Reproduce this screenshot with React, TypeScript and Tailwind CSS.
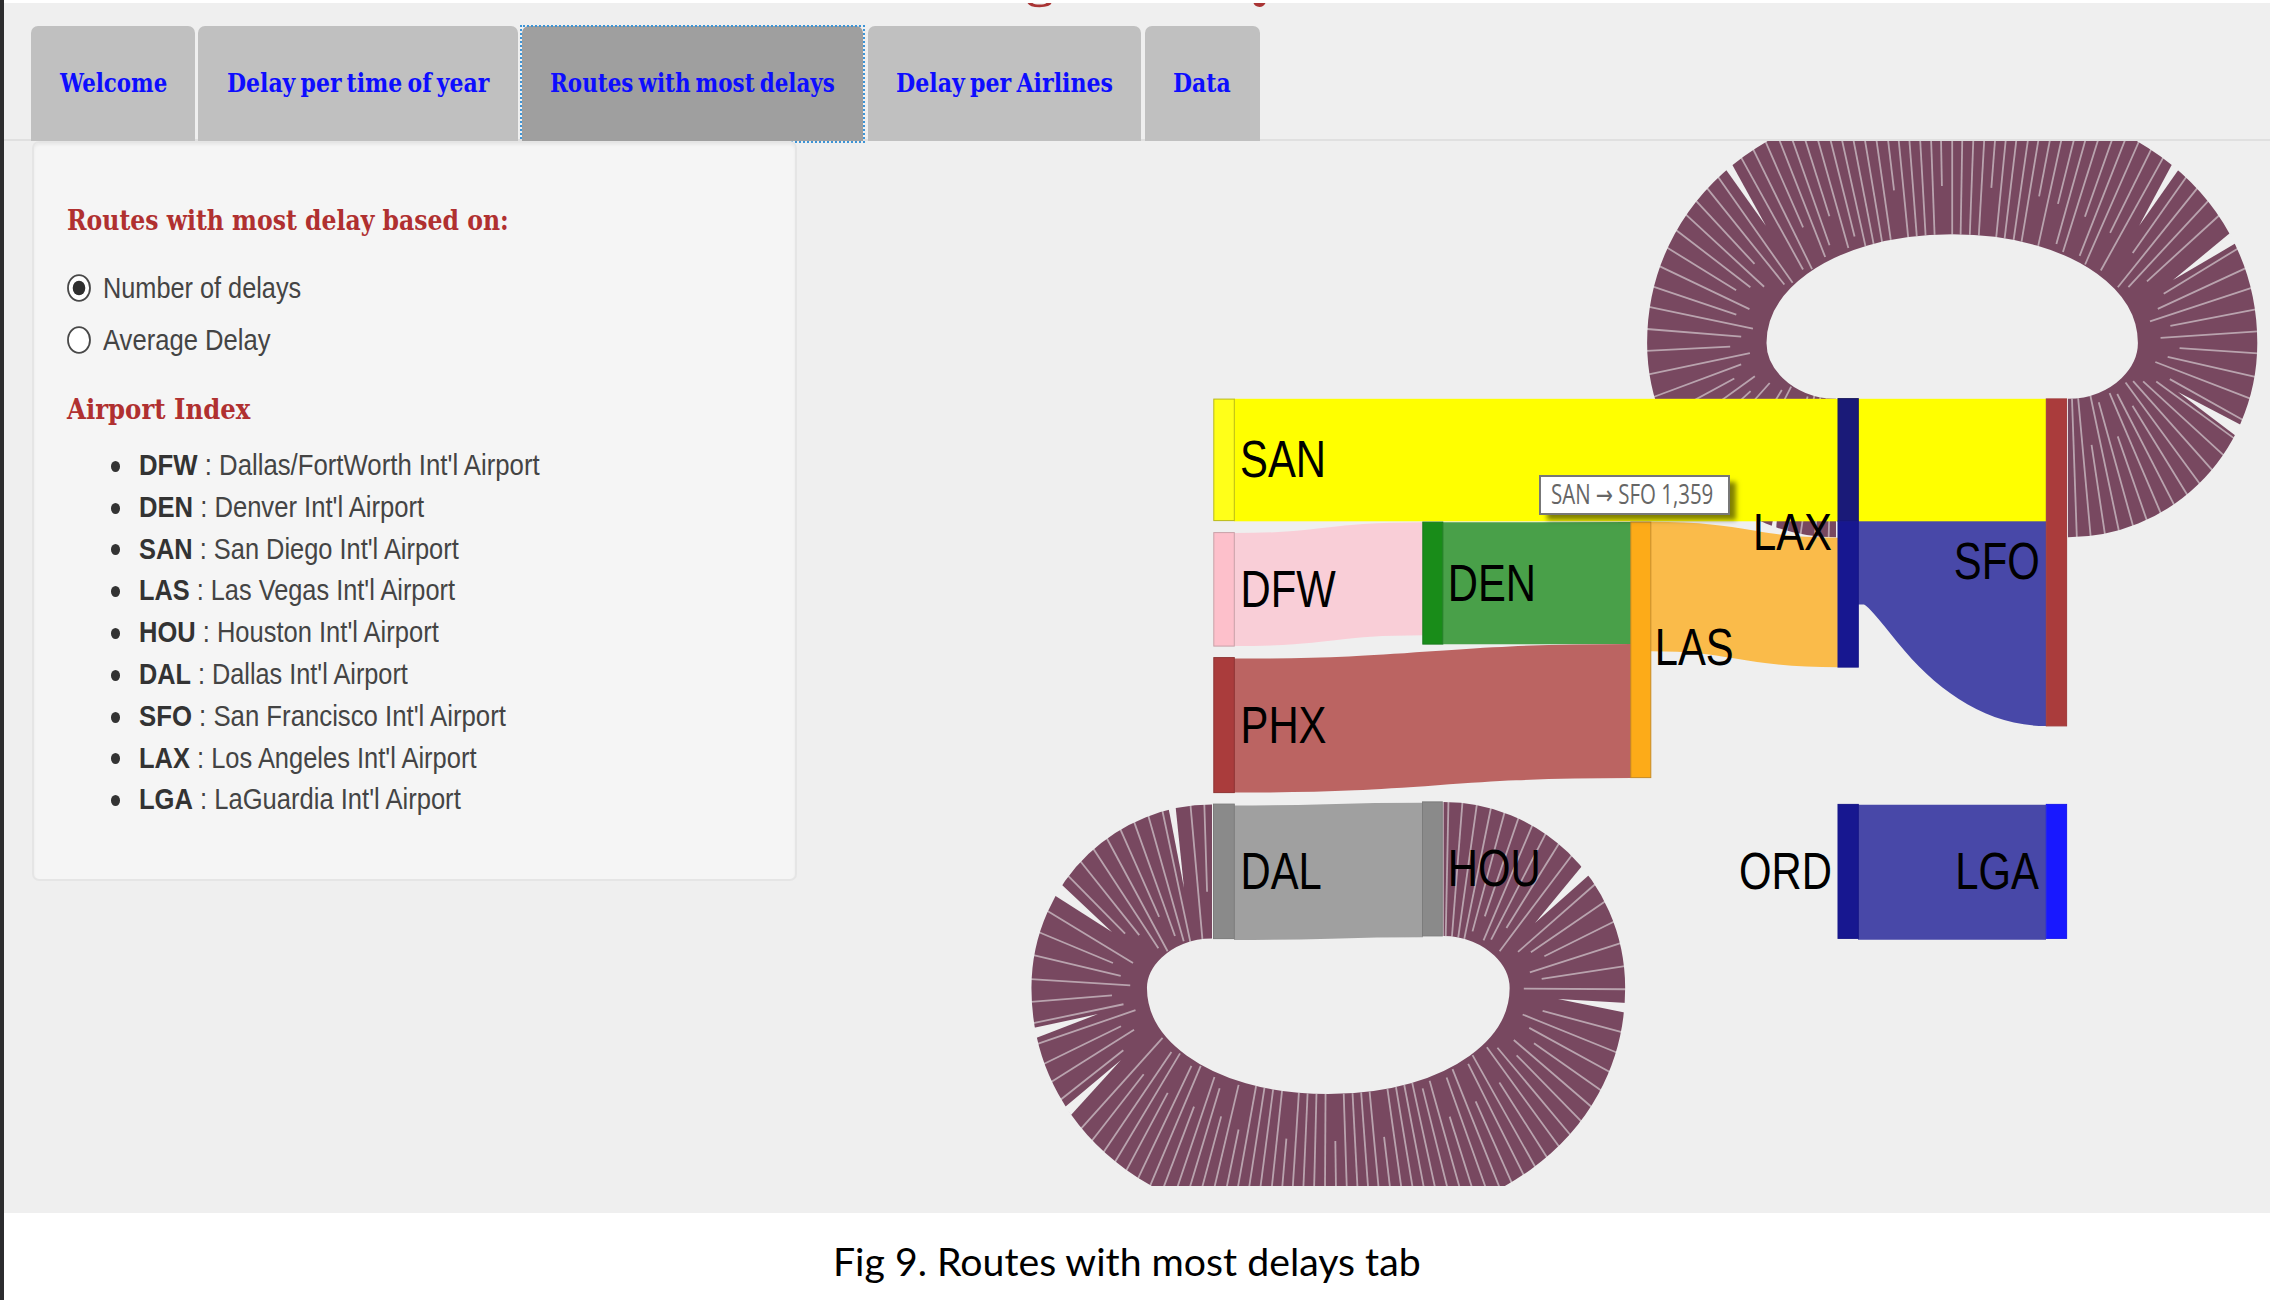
import { useLayoutEffect, useRef, useState, type ReactNode } from "react";

/** Single line of text condensed or stretched horizontally to a given width. */
function Fit({ width, children, className = "" }: { width: number; children: ReactNode; className?: string }) {
  const ref = useRef<HTMLSpanElement>(null);
  const [scale, setScale] = useState(1);
  useLayoutEffect(() => {
    if (ref.current) setScale(width / ref.current.offsetWidth);
  }, [width]);
  return (
    <span className={"block " + className} style={{ width }}>
      <span ref={ref} className="inline-block origin-left whitespace-nowrap" style={{ transform: `scaleX(${scale})` }}>
        {children}
      </span>
    </span>
  );
}

const tabs = [
  { label: "Welcome", box: "w-[164px] mr-[3px]", text: 107 },
  { label: "Delay per time of year", box: "w-[320px] mr-[4px]", text: 262 },
  { label: "Routes with most delays", box: "w-[341px] mr-[5px]", text: 285, active: true },
  { label: "Delay per Airlines", box: "w-[273px] mr-[4px]", text: 217 },
  { label: "Data", box: "w-[115px] pr-[1.5px]", text: 58 },
];

const airports: [string, string, number][] = [
  ["DFW", "Dallas/FortWorth Int'l Airport", 400.5],
  ["DEN", "Denver Int'l Airport", 285.5],
  ["SAN", "San Diego Int'l Airport", 319.5],
  ["LAS", "Las Vegas Int'l Airport", 316],
  ["HOU", "Houston Int'l Airport", 300],
  ["DAL", "Dallas Int'l Airport", 269],
  ["SFO", "San Francisco Int'l Airport", 366.5],
  ["LAX", "Los Angeles Int'l Airport", 337.5],
  ["LGA", "LaGuardia Int'l Airport", 321.5],
];

type P = [number, number];
type Seg = [P, P, P, P];
type Wedge = [P, P, P];
const SX = 0.862;

/** Half-oval curve from one end of a return link to the other, through its apex. */
function loopSegments(l: P, r: P, lx: number, rx: number, midY: number, apexY: number): Seg[] {
  const cx = (lx + rx) / 2;
  const k = 0.5523;
  const k2 = 0.585;
  return [
    [l, [l[0] - (l[0] - lx) * k, l[1]], [lx, midY + (l[1] - midY) * k], [lx, midY]],
    [[lx, midY], [lx, midY + (apexY - midY) * k2], [cx - (cx - lx) * k2, apexY], [cx, apexY]],
    [[cx, apexY], [cx + (rx - cx) * k2, apexY], [rx, midY + (apexY - midY) * k2], [rx, midY]],
    [[rx, midY], [rx, midY + (r[1] - midY) * k], [r[0] + (rx - r[0]) * k, r[1]], r],
  ];
}

function seams(segs: Seg[], half: number, step: number) {
  const out: [number, number, number, number][] = [];
  let prev: P | null = null;
  let acc = step / 2;
  let n = 0;
  const side = segs[0][0][1] > segs[1][3][1] ? 1 : -1;
  for (const s of segs) {
    for (let i = 0; i <= 400; i++) {
      const t = i / 400;
      const u = 1 - t;
      const at = (d: 0 | 1) =>
        u * u * u * s[0][d] + 3 * u * u * t * s[1][d] + 3 * u * t * t * s[2][d] + t * t * t * s[3][d];
      const der = (d: 0 | 1) =>
        3 * u * u * (s[1][d] - s[0][d]) + 6 * u * t * (s[2][d] - s[1][d]) + 3 * t * t * (s[3][d] - s[2][d]);
      const x = at(0) / SX;
      const y = at(1);
      const tx = der(0) / SX;
      const ty = der(1);
      const len = Math.hypot(tx, ty) || 1;
      const nx = (ty / len) * side;
      const ny = (-tx / len) * side;
      const lateral = Math.abs(nx);
      const local = step * (1 + 0.2 * lateral * lateral);
      if (prev) acc += Math.hypot(x - prev[0], y - prev[1]);
      prev = [x, y];
      if (acc < local) continue;
      acc -= local;
      n++;
      const jitter = ((n * 37) % 11) / 11;
      const from =
        lateral > 0.75
          ? -half * (0.3 + 0.5 * jitter)
          : lateral > 0.25
            ? -half * (n % 3 === 1 ? 0.3 + 0.3 * jitter : 0.8 + 0.2 * jitter)
            : -half * (n % 5 === 1 ? 0.3 : 1);
      out.push([(x + nx * from) * SX, y + ny * from, (x + nx * (half + 1)) * SX, y + ny * (half + 1)]);
    }
  }
  return out;
}

function Loop({ segs, width, wedges }: { segs: Seg[]; width: number; wedges: Wedge[] }) {
  const f = (p: P) => `${p[0] / SX} ${p[1]}`;
  const d = `M${f(segs[0][0])}` + segs.map((s) => `C${f(s[1])} ${f(s[2])} ${f(s[3])}`).join("");
  const lines = seams(segs, width / 2, 11.8).filter((l) =>
    wedges.every(([a, b]) => Math.hypot(l[2] - (a[0] + b[0]) / 2, l[3] - (a[1] + b[1]) / 2) > 9),
  );
  return (
    <g>
      <path d={d} transform={`scale(${SX} 1)`} fill="none" stroke="#784860" strokeWidth={width} />
      {lines.map((l, i) => (
        <line key={i} x1={l[0]} y1={l[1]} x2={l[2]} y2={l[3]} stroke="#efefef" strokeOpacity={0.55} strokeWidth={1.8} />
      ))}
      {wedges.map((w) => (
        <polygon key={w.join()} points={w.join(" ")} fill="#efefef" />
      ))}
    </g>
  );
}

const upper = loopSegments([1836, 468], [2068, 468], 1706.8, 2197.6, 343, 165);
const lower = loopSegments([1212, 871.5], [1443.5, 869], 1089.2, 1567.4, 988, 1161);

const upperWedges: Wedge[] = [
  [[1725.5, 169], [1731, 162.5], [1766, 226]],
  [[2173, 162.5], [2179, 169], [2139, 226]],
  [[2230, 233], [2236, 243], [2173, 280]],
  [[2243, 426], [2236, 436], [2178, 392]],
  [[1768, 545], [1775, 545], [1779, 490]],
];
const lowerWedges: Wedge[] = [
  [[1168.5, 808], [1175.5, 806], [1184, 888]],
  [[1054, 895], [1061, 884], [1112, 932]],
  [[1033, 1028], [1036, 1038], [1098, 1014]],
  [[1065, 1107], [1071, 1115], [1121, 1060]],
  [[1582, 866], [1589, 875], [1535, 923]],
  [[1627, 1003], [1627, 1013], [1558, 999]],
];

function Flow({ x1, y1, x2, y2, w, color }: { x1: number; y1: number; x2: number; y2: number; w: number; color: string }) {
  const m = (x1 + x2) / 2;
  return <path d={`M${x1} ${y1}C${m} ${y1} ${m} ${y2} ${x2} ${y2}`} fill="none" stroke={color} strokeWidth={w} />;
}

const nodes: [number, number, number, number, string, string][] = [
  [1213.8, 399, 20.5, 121.5, "#ffff19", "#b9b91a"],
  [1213.8, 532.5, 20.5, 113.5, "#fdc0cb", "#c9a0a8"],
  [1213.8, 657.5, 20.5, 135, "#aa3c3c", "#8e3434"],
  [1422.8, 522, 20, 122, "#198c19", "#197a1d"],
  [1630.8, 522, 20, 255.5, "#fdab18", "#c58a25"],
  [1838, 398.5, 20.3, 122.5, "#1a1a78", "#1a1a60"],
  [1838, 521, 20.3, 146, "#171790", "#171788"],
  [2046.3, 398.8, 20.3, 327, "#aa3c3c", "#a03a3a"],
  [1838, 804.3, 20.3, 134, "#171790", "#171788"],
  [2046.3, 804.3, 20.3, 134, "#1818ff", "#1818ee"],
  [1213.5, 804, 20.8, 134.5, "#8a8a8a", "#7c7c7c"],
  [1422.5, 801.8, 19.8, 134, "#8a8a8a", "#7c7c7c"],
];

const labels: [string, number, number, "start" | "end"][] = [
  ["SAN", 1240, 477.2, "start"],
  ["DFW", 1240.5, 606.7, "start"],
  ["PHX", 1240.5, 742.5, "start"],
  ["DEN", 1447.7, 600.5, "start"],
  ["LAS", 1654.7, 665.2, "start"],
  ["LAX", 1832, 550.3, "end"],
  ["SFO", 2039.7, 579.3, "end"],
  ["ORD", 1832, 889, "end"],
  ["LGA", 2039, 889, "end"],
  ["DAL", 1240.5, 888.6, "start"],
  ["HOU", 1447.7, 886.3, "start"],
];

function SankeyChart() {
  return (
    <svg className="block h-[1045px] w-[1474px]" viewBox="797 140.9 1474 1045">
      <Loop segs={upper} width={138.5} wedges={upperWedges} />
      <Loop segs={lower} width={134} wedges={lowerWedges} />
      <Flow x1={1234} y1={589.5} x2={1423} y2={578.7} w={113} color="#f9ced7" />
      <Flow x1={1443} y1={583.2} x2={1631} y2={583} w={122} color="#49a049" />
      <Flow x1={1234} y1={725.5} x2={1631} y2={711} w={134} color="#bb6462" />
      <Flow x1={1651} y1={586.5} x2={1838} y2={602.3} w={129.5} color="#fabb4a" />
      <path d="M1858 521V604.3H1864Q1869 606 1898 643C1936 690 1986 726 2046 726V521Z" fill="#4848a8" />
      <Flow x1={1234} y1={872.7} x2={1423} y2={870} w={134.5} color="#a0a0a0" />
      <Flow x1={1858} y1={872.2} x2={2046} y2={872.2} w={135} color="#4848a8" />
      <rect x={1234} y={398.7} width={812} height={122.5} fill="#ffff00" />
      {nodes.map(([x, y, w, h, fill, stroke]) => (
        <rect key={`${x}-${y}`} x={x} y={y} width={w} height={h} fill={fill} stroke={stroke} strokeWidth={1} />
      ))}
      {labels.map(([t, x, y, anchor]) => (
        <text
          key={t}
          transform={`translate(${x} ${y}) scale(0.82 1)`}
          textAnchor={anchor}
          fill="#000"
          className="font-['Liberation_Sans',sans-serif] text-[51px]"
        >
          {t}
        </text>
      ))}
    </svg>
  );
}

function Radio({ label, width, checked }: { label: string; width: number; checked?: boolean }) {
  return (
    <label className="flex h-[52px] items-center">
      <svg className="mr-[12.5px] h-[28px] w-[24px]" viewBox="0 0 24 28">
        <ellipse cx="12" cy="14" rx="11" ry="12.8" fill="#fff" stroke="#484848" strokeWidth="1.8" />
        {checked && <ellipse cx="12" cy="14" rx="6.3" ry="7.3" fill="#2f2f2f" />}
      </svg>
      <Fit width={width} className="text-[29.5px] leading-[42px] text-[#444]">
        {label}
      </Fit>
    </label>
  );
}

export default function App() {
  return (
    <div className="flex h-[1300px] w-[2270px] overflow-hidden bg-white font-['Liberation_Sans',sans-serif]">
      <div className="w-[3.5px] shrink-0 bg-[#2c2c2e]" />
      <div className="flex min-w-0 flex-1 flex-col">
        <main className="mt-[3px] h-[1209.5px] shrink-0 bg-[#efefef]">
          <svg className="block h-[22px] w-full" viewBox="3.5 3 2266.5 22">
            <path d="M1027 3Q1029 7.2 1039 7.2Q1050 7 1051 3H1046Q1044 4.6 1039 4.6Q1034 4.6 1032 3Z" fill="#a93434" />
            <path d="M1253 3H1265Q1263 7 1259 7Q1254 6.5 1253 3Z" fill="#a93434" />
          </svg>
          <nav className="flex h-[116px] items-start border-b-2 border-[#e0e0e0] pl-[27.5px] pt-[0.5px]">
            {tabs.map((t) => (
              <div
                key={t.label}
                className={
                  "relative flex h-[115px] shrink-0 items-center justify-center rounded-t-[7px] font-['DejaVu_Serif',serif] text-[26.5px] font-bold [word-spacing:-3px] text-[#0d0dff] " +
                  (t.active ? "bg-[#9f9f9f] " : "bg-[#c0c0c0] ") +
                  t.box
                }
              >
                <Fit width={t.text}>{t.label}</Fit>
                {t.active && (
                  <div className="absolute -inset-x-[2px] -bottom-[2px] -top-px border-[2.5px] border-dotted border-[#3d94d6]" />
                )}
              </div>
            ))}
          </nav>
          <div className="flex">
            <aside className="relative z-10 ml-[28px] h-[740px] w-[765px] shrink-0 rounded-[7px] border-2 border-[#e5e5e5] bg-[#f5f5f5] pl-[33px] pt-[57px] shadow-[inset_0_2px_3px_rgba(0,0,0,0.05)]">
              <h2 className="font-['DejaVu_Serif',serif] text-[28px] font-bold leading-[42px] text-[#b03030]">
                <Fit width={441.5}>Routes with most delay based on:</Fit>
              </h2>
              <div className="mt-[20px]">
                <Radio label="Number of delays" width={198} checked />
                <Radio label="Average Delay" width={167.5} />
              </div>
              <h2 className="mt-[22.5px] font-['DejaVu_Serif',serif] text-[28px] font-bold leading-[42px] text-[#b03030]">
                <Fit width={183}>Airport Index</Fit>
              </h2>
              <ul className="mt-[13.5px]">
                {airports.map(([code, name, w]) => (
                  <li key={code} className="flex h-[41.8px] items-center pl-[44px] text-[29.5px] leading-[41.8px] text-[#444]">
                    <span className="mr-[18.5px] mt-[3px] h-[11px] w-[9.5px] rounded-[50%] bg-[#333]" />
                    <Fit width={w}>
                      <b className="text-[#333]">{code}</b> : {name}
                    </Fit>
                  </li>
                ))}
              </ul>
            </aside>
            <div className="relative -mt-[0.5px]">
              <SankeyChart />
              <div className="absolute left-[742.5px] top-[334.5px] flex h-[40px] w-[191px] items-center border-2 border-[#777] bg-white pl-[9.5px] font-['Open_Sans',sans-serif] text-[26.5px] leading-none text-[#666] shadow-[7px_6px_5px_-1px_rgba(0,0,0,0.5)]">
                <Fit width={162}>
                  SAN <span className="font-['DejaVu_Sans',sans-serif]">→</span> SFO 1,359
                </Fit>
              </div>
            </div>
          </div>
        </main>
        <p className="pl-[829px] pt-[23px] font-['Lato',sans-serif] text-[39.5px] leading-[50px] text-black">
          <Fit width={588}>Fig 9. Routes with most delays tab</Fit>
        </p>
      </div>
    </div>
  );
}
